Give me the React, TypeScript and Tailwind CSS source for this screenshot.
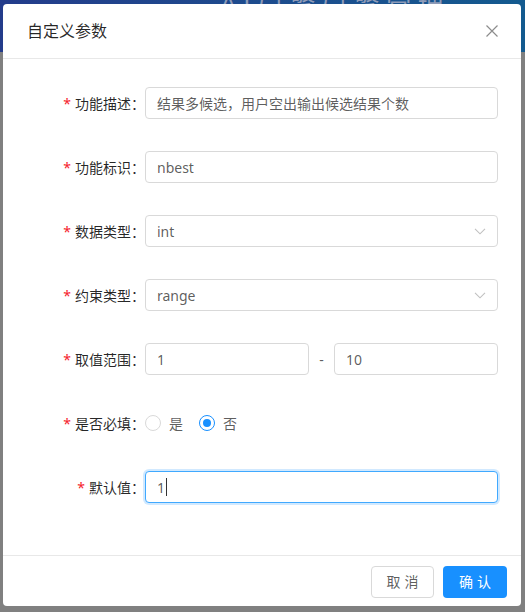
import React from "react";

const FONT = "font-['Noto_Sans','Noto_Sans_CJK_SC',sans-serif]";

function Chevron() {
  return (
    <svg width="12" height="12" viewBox="0 0 12 12" fill="none" stroke="currentColor" strokeWidth="1.1">
      <path d="M1 3.8l5 5 5-5" />
    </svg>
  );
}

function FormRow({ label, children }: { label: string; children: React.ReactNode }) {
  return (
    <div className="flex items-center h-[32px]">
      <div className="w-[142px] flex justify-end items-center text-[14px] text-[rgba(0,0,0,0.85)]">
        <span className="text-[#f5222d] mr-[4px] text-[14px]">*</span>
        <span>{label}：</span>
      </div>
      <div className="flex-1 pr-[23px] flex items-center">{children}</div>
    </div>
  );
}

function TextBox({ value, focused }: { value: string; focused?: boolean }) {
  return (
    <div
      className={`h-[32px] w-full rounded-[4px] border px-[11px] flex items-center text-[14px] text-[rgba(0,0,0,0.65)] bg-white ${
        focused ? "border-[#40a9ff] shadow-[0_0_0_2px_rgba(24,144,255,0.2)]" : "border-[#d9d9d9]"
      }`}
    >
      {value}
      {focused && <span className="inline-block w-px h-[18px] bg-[#333] ml-[1px]" />}
    </div>
  );
}

function SelectBox({ value }: { value: string }) {
  return (
    <div className="h-[32px] w-full rounded-[4px] border border-[#d9d9d9] pl-[11px] pr-[11px] flex items-center justify-between text-[14px] text-[rgba(0,0,0,0.65)]">
      <span>{value}</span>
      <span className="text-[rgba(0,0,0,0.25)] flex">
        <Chevron />
      </span>
    </div>
  );
}

function Radio({ checked, label }: { checked?: boolean; label: string }) {
  return (
    <label className="flex items-center mr-[8px]">
      <span
        className={`w-[16px] h-[16px] rounded-full border flex items-center justify-center bg-white ${
          checked ? "border-[#1890ff]" : "border-[#d9d9d9]"
        }`}
      >
        {checked && <span className="w-[8px] h-[8px] rounded-full bg-[#1890ff]" />}
      </span>
      <span className="px-[8px] text-[14px] text-[rgba(0,0,0,0.65)]">{label}</span>
    </label>
  );
}

export default function App() {
  return (
    <div className={`relative w-[525px] h-[612px] overflow-hidden bg-[#808080] ${FONT}`}>
      {/* dimmed page behind */}
      <div className="h-[52px] bg-gradient-to-r from-[#233c8b] to-[#135a8f] relative overflow-hidden">
        <div className="absolute left-[220px] -top-[16px] text-[26px] tracking-[6px] text-[#8e9bb8]">AI引擎引擎管理</div>
      </div>

      {/* Modal */}
      <div className="absolute left-[3px] top-[4px] w-[518px] h-[602px] bg-white rounded-[4px] flex flex-col">
        <div className="h-[55px] shrink-0 border-b border-[#e8e8e8] flex items-center justify-between pl-[24px] pr-[23px]">
          <span className="text-[16px] text-[rgba(0,0,0,0.85)]">自定义参数</span>
          <svg width="12" height="12" viewBox="0 0 12 12" stroke="rgba(0,0,0,0.45)" strokeWidth="1.2">
            <path d="M0.5 0.5l11 11M11.5 0.5l-11 11" />
          </svg>
        </div>

        <div className="flex-1 pt-[28px] flex flex-col gap-[32px]">
          <FormRow label="功能描述">
            <TextBox value="结果多候选，用户空出输出候选结果个数" />
          </FormRow>
          <FormRow label="功能标识">
            <TextBox value="nbest" />
          </FormRow>
          <FormRow label="数据类型">
            <SelectBox value="int" />
          </FormRow>
          <FormRow label="约束类型">
            <SelectBox value="range" />
          </FormRow>
          <FormRow label="取值范围">
            <div className="flex items-center w-full">
              <TextBox value="1" />
              <span className="w-[25px] shrink-0 text-center text-[14px] text-[rgba(0,0,0,0.65)]">-</span>
              <TextBox value="10" />
            </div>
          </FormRow>
          <FormRow label="是否必填">
            <div className="flex items-center">
              <Radio label="是" />
              <Radio checked label="否" />
            </div>
          </FormRow>
          <FormRow label="默认值">
            <TextBox value="1" focused />
          </FormRow>
        </div>

        <div className="h-[51px] shrink-0 border-t border-[#e8e8e8] flex items-center justify-end gap-[9px] pr-[14px] pt-[1px]">
          <button className="h-[32px] w-[63px] rounded-[4px] border border-[#d9d9d9] bg-white text-[14px] text-[rgba(0,0,0,0.65)] tracking-[4px] pl-[4px]">
            取消
          </button>
          <button className="h-[32px] w-[64px] rounded-[4px] bg-[#1890ff] text-[14px] text-white tracking-[4px] pl-[4px]">
            确认
          </button>
        </div>
      </div>
    </div>
  );
}
